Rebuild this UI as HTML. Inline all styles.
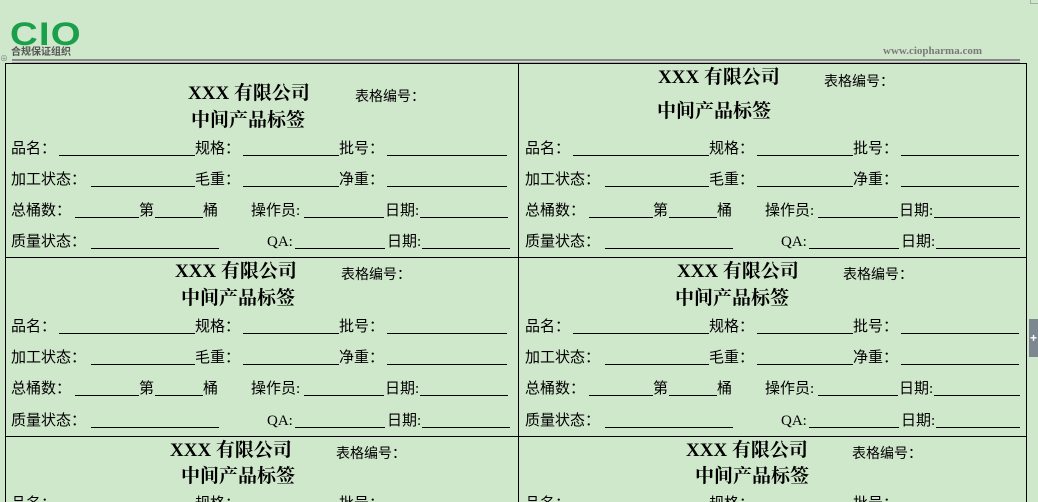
<!DOCTYPE html>
<html style="overflow:hidden;width:1038px;height:502px"><head><meta charset="utf-8"><style>
body{margin:0;width:1038px;height:502px;overflow:hidden;background:#cfe7cb;position:relative;font-family:"Liberation Serif","Noto Sans CJK SC",serif;color:#000}
.a{position:absolute;white-space:nowrap}
.t{font-size:15px;line-height:18px;margin-top:1px}
.h{font-size:19px;font-weight:bold;line-height:20px;font-family:"Liberation Serif","Noto Serif CJK SC",serif}
.s{font-size:14px;line-height:16px;font-family:"Liberation Sans","Noto Sans CJK SC",sans-serif}
.u{position:absolute;height:0;border-bottom:1px solid #000}
.c{position:absolute;width:0;height:0}
.hl{position:absolute;height:0;border-top:1px solid #000}
.vl{position:absolute;width:0;border-left:1px solid #000}
</style></head><body>
<div class="a" style="left:10px;top:20px;font:bold 32px/28px 'Liberation Sans',sans-serif;color:#1aa04a;letter-spacing:1px;transform:scaleX(1.2);transform-origin:left">CIO</div>
<div class="a" style="left:11px;top:45px;font:bold 10px/12px 'Noto Sans CJK SC',sans-serif;color:#555">合规保证组织</div>
<div class="a" style="left:883px;top:45px;font:bold 11px/12px 'Liberation Serif',serif;color:#7a7a7a">www.ciopharma.com</div>
<div class="a" style="left:12px;top:59px;width:1008px;height:2px;background:#888"></div>
<div class="a" style="left:12px;top:62px;width:1008px;height:1px;background:#aaa"></div>
<div class="a" style="left:0;top:53px;color:#888;font-size:8px">⊕</div>
<div class="a" style="left:1029px;top:319px;width:9px;height:38px;background:#7d8790;color:#fff;font:bold 12px/38px sans-serif;text-align:center">+</div>
<div class="a" style="left:1030px;top:0;width:8px;height:3px;border:1px solid #aaa;border-top:0"></div>

<div class="vl" style="left:5px;top:63px;height:439px"></div>
<div class="vl" style="left:518px;top:63px;height:439px"></div>
<div class="vl" style="left:1026px;top:63px;height:439px"></div>
<div class="hl" style="left:5px;top:63px;width:1022px"></div>
<div class="hl" style="left:5px;top:257px;width:1022px"></div>
<div class="hl" style="left:5px;top:436px;width:1022px"></div>

<div class="a h" style="left:188px;top:84px">XXX 有限公司</div><div class="a s" style="left:355px;top:88px">表格编号：</div><div class="a h" style="left:191px;top:111px">中间产品标签</div>
<div class="a h" style="left:658px;top:68px">XXX 有限公司</div><div class="a s" style="left:824px;top:73px">表格编号：</div><div class="a h" style="left:657px;top:102px">中间产品标签</div>
<div class="a h" style="left:175px;top:262px">XXX 有限公司</div><div class="a s" style="left:341px;top:266px">表格编号：</div><div class="a h" style="left:181px;top:289px">中间产品标签</div>
<div class="a h" style="left:677px;top:262px">XXX 有限公司</div><div class="a s" style="left:843px;top:266px">表格编号：</div><div class="a h" style="left:675px;top:289px">中间产品标签</div>
<div class="a h" style="left:170px;top:441px">XXX 有限公司</div><div class="a s" style="left:336px;top:445px">表格编号：</div><div class="a h" style="left:181px;top:467px">中间产品标签</div>
<div class="a h" style="left:686px;top:441px">XXX 有限公司</div><div class="a s" style="left:852px;top:445px">表格编号：</div><div class="a h" style="left:695px;top:467px">中间产品标签</div>

<div class="c" style="left:0;top:148px">
<div class="a t" style="left:11px;top:-9px">品名：</div><div class="u" style="left:59px;top:7px;width:136px"></div><div class="a t" style="left:195px;top:-9px">规格：</div><div class="u" style="left:243px;top:7px;width:96px"></div><div class="a t" style="left:339px;top:-9px">批号：</div><div class="u" style="left:387px;top:7px;width:120px"></div>
<div class="a t" style="left:11px;top:22px">加工状态：</div><div class="u" style="left:91px;top:38px;width:104px"></div><div class="a t" style="left:195px;top:22px">毛重：</div><div class="u" style="left:243px;top:38px;width:96px"></div><div class="a t" style="left:339px;top:22px">净重：</div><div class="u" style="left:387px;top:38px;width:120px"></div>
<div class="a t" style="left:11px;top:53px">总桶数：</div><div class="u" style="left:75px;top:69px;width:64px"></div><div class="a t" style="left:139px;top:53px">第</div><div class="u" style="left:155px;top:69px;width:48px"></div><div class="a t" style="left:203px;top:53px">桶</div><div class="a t" style="left:251px;top:53px">操作员:</div><div class="u" style="left:304px;top:69px;width:80px"></div><div class="a t" style="left:385px;top:53px">日期:</div><div class="u" style="left:420px;top:69px;width:88px"></div>
<div class="a t" style="left:11px;top:84px">质量状态：</div><div class="u" style="left:91px;top:100px;width:128px"></div><div class="a t" style="left:267px;top:84px">QA:</div><div class="u" style="left:295px;top:100px;width:90px"></div><div class="a t" style="left:387px;top:84px">日期:</div><div class="u" style="left:422px;top:100px;width:88px"></div>
</div>
<div class="c" style="left:514px;top:148px">
<div class="a t" style="left:11px;top:-9px">品名：</div><div class="u" style="left:59px;top:7px;width:136px"></div><div class="a t" style="left:195px;top:-9px">规格：</div><div class="u" style="left:243px;top:7px;width:96px"></div><div class="a t" style="left:339px;top:-9px">批号：</div><div class="u" style="left:387px;top:7px;width:118px"></div>
<div class="a t" style="left:11px;top:22px">加工状态：</div><div class="u" style="left:91px;top:38px;width:104px"></div><div class="a t" style="left:195px;top:22px">毛重：</div><div class="u" style="left:243px;top:38px;width:96px"></div><div class="a t" style="left:339px;top:22px">净重：</div><div class="u" style="left:387px;top:38px;width:118px"></div>
<div class="a t" style="left:11px;top:53px">总桶数：</div><div class="u" style="left:75px;top:69px;width:64px"></div><div class="a t" style="left:139px;top:53px">第</div><div class="u" style="left:155px;top:69px;width:48px"></div><div class="a t" style="left:203px;top:53px">桶</div><div class="a t" style="left:251px;top:53px">操作员:</div><div class="u" style="left:304px;top:69px;width:80px"></div><div class="a t" style="left:385px;top:53px">日期:</div><div class="u" style="left:420px;top:69px;width:86px"></div>
<div class="a t" style="left:11px;top:84px">质量状态：</div><div class="u" style="left:91px;top:100px;width:128px"></div><div class="a t" style="left:267px;top:84px">QA:</div><div class="u" style="left:295px;top:100px;width:90px"></div><div class="a t" style="left:387px;top:84px">日期:</div><div class="u" style="left:422px;top:100px;width:84px"></div>
</div>
<div class="c" style="left:0;top:326px">
<div class="a t" style="left:11px;top:-9px">品名：</div><div class="u" style="left:59px;top:7px;width:136px"></div><div class="a t" style="left:195px;top:-9px">规格：</div><div class="u" style="left:243px;top:7px;width:96px"></div><div class="a t" style="left:339px;top:-9px">批号：</div><div class="u" style="left:387px;top:7px;width:120px"></div>
<div class="a t" style="left:11px;top:22px">加工状态：</div><div class="u" style="left:91px;top:38px;width:104px"></div><div class="a t" style="left:195px;top:22px">毛重：</div><div class="u" style="left:243px;top:38px;width:96px"></div><div class="a t" style="left:339px;top:22px">净重：</div><div class="u" style="left:387px;top:38px;width:120px"></div>
<div class="a t" style="left:11px;top:53px">总桶数：</div><div class="u" style="left:75px;top:69px;width:64px"></div><div class="a t" style="left:139px;top:53px">第</div><div class="u" style="left:155px;top:69px;width:48px"></div><div class="a t" style="left:203px;top:53px">桶</div><div class="a t" style="left:251px;top:53px">操作员:</div><div class="u" style="left:304px;top:69px;width:80px"></div><div class="a t" style="left:385px;top:53px">日期:</div><div class="u" style="left:420px;top:69px;width:88px"></div>
<div class="a t" style="left:11px;top:85px">质量状态：</div><div class="u" style="left:91px;top:101px;width:128px"></div><div class="a t" style="left:267px;top:85px">QA:</div><div class="u" style="left:295px;top:101px;width:90px"></div><div class="a t" style="left:387px;top:85px">日期:</div><div class="u" style="left:422px;top:101px;width:88px"></div>
</div>
<div class="c" style="left:514px;top:326px">
<div class="a t" style="left:11px;top:-9px">品名：</div><div class="u" style="left:59px;top:7px;width:136px"></div><div class="a t" style="left:195px;top:-9px">规格：</div><div class="u" style="left:243px;top:7px;width:96px"></div><div class="a t" style="left:339px;top:-9px">批号：</div><div class="u" style="left:387px;top:7px;width:118px"></div>
<div class="a t" style="left:11px;top:22px">加工状态：</div><div class="u" style="left:91px;top:38px;width:104px"></div><div class="a t" style="left:195px;top:22px">毛重：</div><div class="u" style="left:243px;top:38px;width:96px"></div><div class="a t" style="left:339px;top:22px">净重：</div><div class="u" style="left:387px;top:38px;width:118px"></div>
<div class="a t" style="left:11px;top:53px">总桶数：</div><div class="u" style="left:75px;top:69px;width:64px"></div><div class="a t" style="left:139px;top:53px">第</div><div class="u" style="left:155px;top:69px;width:48px"></div><div class="a t" style="left:203px;top:53px">桶</div><div class="a t" style="left:251px;top:53px">操作员:</div><div class="u" style="left:304px;top:69px;width:80px"></div><div class="a t" style="left:385px;top:53px">日期:</div><div class="u" style="left:420px;top:69px;width:86px"></div>
<div class="a t" style="left:11px;top:85px">质量状态：</div><div class="u" style="left:91px;top:101px;width:128px"></div><div class="a t" style="left:267px;top:85px">QA:</div><div class="u" style="left:295px;top:101px;width:90px"></div><div class="a t" style="left:387px;top:85px">日期:</div><div class="u" style="left:422px;top:101px;width:84px"></div>
</div>
<div class="c" style="left:0;top:503px">
<div class="a t" style="left:11px;top:-9px">品名：</div><div class="a t" style="left:195px;top:-9px">规格：</div><div class="a t" style="left:339px;top:-9px">批号：</div>
</div>
<div class="c" style="left:514px;top:503px">
<div class="a t" style="left:11px;top:-9px">品名：</div><div class="a t" style="left:195px;top:-9px">规格：</div><div class="a t" style="left:339px;top:-9px">批号：</div>
</div>
</body></html>
